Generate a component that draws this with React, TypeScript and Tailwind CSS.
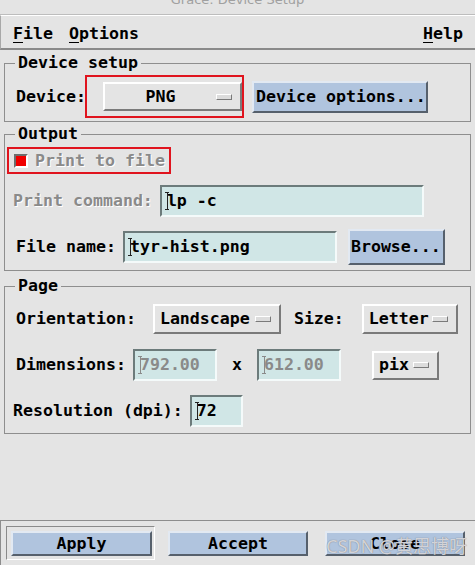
import React from "react";

const raised =
  "border-2 border-t-white border-l-white border-b-[#7a7a7a] border-r-[#7a7a7a]";
const blue =
  "bg-[#b0c4de] border-2 border-t-[#e2e9f2] border-l-[#e2e9f2] border-b-[#56606c] border-r-[#56606c]";
const dim = "text-[#8a8a8a] [text-shadow:1px_1px_0_#ffffff]";

function IBeam({ color }: { color: string }) {
  return (
    <svg
      width="6"
      height="18"
      viewBox="0 0 6 18"
      className="absolute left-[2px] top-1/2 -translate-y-1/2"
    >
      <path d="M1 0.5h4M3.5 0.5v17M1 17.5h4" stroke={color} strokeWidth="1" fill="none" />
    </svg>
  );
}

function Field({
  value,
  width,
  disabled,
}: {
  value: string;
  width: string;
  disabled?: boolean;
}) {
  return (
    <div
      className={`relative flex h-[32px] items-center bg-[#d0e6e6] pl-[5px] border-2 border-t-[#6c7b7b] border-l-[#6c7b7b] border-b-[#f4fafa] border-r-[#f4fafa] ${width}`}
    >
      <IBeam color={disabled ? "#8a8a8a" : "#222222"} />
      <span className={disabled ? "text-[#8a8a8a]" : "text-black"}>{value}</span>
    </div>
  );
}

function Indicator() {
  return (
    <span className="block h-[6px] w-[16px] border border-t-white border-l-white border-b-[#7a7a7a] border-r-[#7a7a7a] bg-[#dcdcdc]" />
  );
}

function OptionMenu({ label, width, height }: { label: string; width: string; height: string }) {
  return (
    <div className={`flex items-center pl-[5px] pr-[8px] ${raised} ${width} ${height}`}>
      <span className="flex-1">{label}</span>
      <Indicator />
    </div>
  );
}

function Legend({ children }: { children: React.ReactNode }) {
  return <legend className="ml-[10px] px-[3px]">{children}</legend>;
}

export default function App() {
  return (
    <div className="relative flex h-[565px] w-[475px] flex-col overflow-hidden bg-[#e4e4e4] font-['DejaVu_Sans_Mono',monospace] text-[16.6px] font-bold leading-[18px] text-black">
      <div className="h-[15px] overflow-hidden border-b border-b-[#bdbdbd] text-center font-['DejaVu_Sans',sans-serif] text-[13px] font-normal leading-[14px] text-[#a0a0a0]">
        <div className="-mt-[7px]">Grace: Device Setup</div>
      </div>

      <div className="flex h-[35px] items-center border-t border-t-white border-b-2 border-b-[#8a8a8a] border-l border-l-[#a8a8a8] px-[12px] pt-[3px]">
        <span>
          <span className="underline underline-offset-[3px]">F</span>ile
        </span>
        <span className="ml-[16px]">
          <span className="underline underline-offset-[3px]">O</span>ptions
        </span>
        <span className="ml-auto">
          <span className="underline underline-offset-[3px]">H</span>elp
        </span>
      </div>

      <fieldset className="mx-[4px] mt-[4px] border border-[#8e8e8e] pb-[3px]">
        <Legend>Device setup</Legend>
        <div className="mt-[3px] flex items-center pl-[11px]">
          <span className="w-[69px]">Device:</span>
          <div className="border-2 border-[#e0141e] py-[5px] pl-[16px]">
            <div className={`flex h-[29px] w-[139px] items-center pr-[8px] ${raised}`}>
              <span className="flex-1 text-center">PNG</span>
              <Indicator />
            </div>
          </div>
          <button className={`ml-[8px] h-[32px] w-[176px] pl-[2px] text-left ${blue}`}>
            Device options...
          </button>
        </div>
      </fieldset>

      <fieldset className="mx-[4px] mt-[3px] border border-[#8e8e8e] pb-[5px]">
        <Legend>Output</Legend>
        <div className="ml-[2px] mt-[4px] flex h-[27px] w-[164px] items-center border-2 border-[#e0141e] pl-[5px]">
          <span className="block h-[14px] w-[14px] border-2 border-t-[#6e6e6e] border-l-[#6e6e6e] border-b-white border-r-white bg-[#f00000]" />
          <span className={`ml-[7px] ${dim}`}>Print to file</span>
        </div>
        <div className="mt-[11px] flex items-center pl-[8px]">
          <span className={dim}>Print command:</span>
          <div className="ml-[7px]">
            <Field value="lp -c" width="w-[264px]" />
          </div>
        </div>
        <div className="mt-[12px] flex items-center pl-[11px]">
          <span>File name:</span>
          <div className="ml-[7px]">
            <Field value="tyr-hist.png" width="w-[214px]" />
          </div>
          <button className={`ml-[11px] h-[36px] w-[97px] pl-[1px] text-left ${blue}`}>
            Browse...
          </button>
        </div>
      </fieldset>

      <fieldset className="mx-[4px] mt-[6px] border border-[#8e8e8e] pb-[6px]">
        <Legend>Page</Legend>
        <div className="mt-[9px] flex items-center pl-[11px]">
          <span>Orientation:</span>
          <div className="ml-[17px]">
            <OptionMenu label="Landscape" width="w-[128px]" height="h-[30px]" />
          </div>
          <span className="ml-[13px]">Size:</span>
          <div className="ml-[18px]">
            <OptionMenu label="Letter" width="w-[96px]" height="h-[30px]" />
          </div>
        </div>
        <div className="mt-[15px] flex items-center pl-[11px]">
          <span>Dimensions:</span>
          <div className="ml-[7px]">
            <Field value="792.00" width="w-[84px]" disabled />
          </div>
          <span className="ml-[15px]">x</span>
          <div className="ml-[15px]">
            <Field value="612.00" width="w-[84px]" disabled />
          </div>
          <div className="ml-[31px]">
            <OptionMenu label="pix" width="w-[67px]" height="h-[29px]" />
          </div>
        </div>
        <div className="mt-[14px] flex items-center pl-[8px]">
          <span>Resolution (dpi):</span>
          <div className="ml-[7px]">
            <Field value="72" width="w-[53px]" />
          </div>
        </div>
      </fieldset>

      <div className="mt-auto flex h-[45px] items-start border-t border-l border-[#8d8d8d] pl-[5px] pt-[5px]">
        <div className="border border-t-[#8a8a8a] border-l-[#8a8a8a] border-b-white border-r-white pb-[3px] pl-[4px] pr-[2px] pt-[4px]">
          <button className={`h-[25px] w-[141px] ${blue}`}>Apply</button>
        </div>
        <button className={`ml-[13px] mt-[5px] h-[25px] w-[140px] ${blue}`}>Accept</button>
        <button className={`ml-[17px] mt-[5px] h-[25px] w-[140px] ${blue}`}>Close</button>
      </div>

      <div className="pointer-events-none absolute bottom-[8px] right-[8px] font-['Noto_Sans','Noto_Sans_CJK_SC',sans-serif] text-[18px] font-normal leading-[22px] text-[#eeeef4]/80 [text-shadow:0_0_1px_#666666]">
        CSDN @黄思博呀
      </div>
    </div>
  );
}
